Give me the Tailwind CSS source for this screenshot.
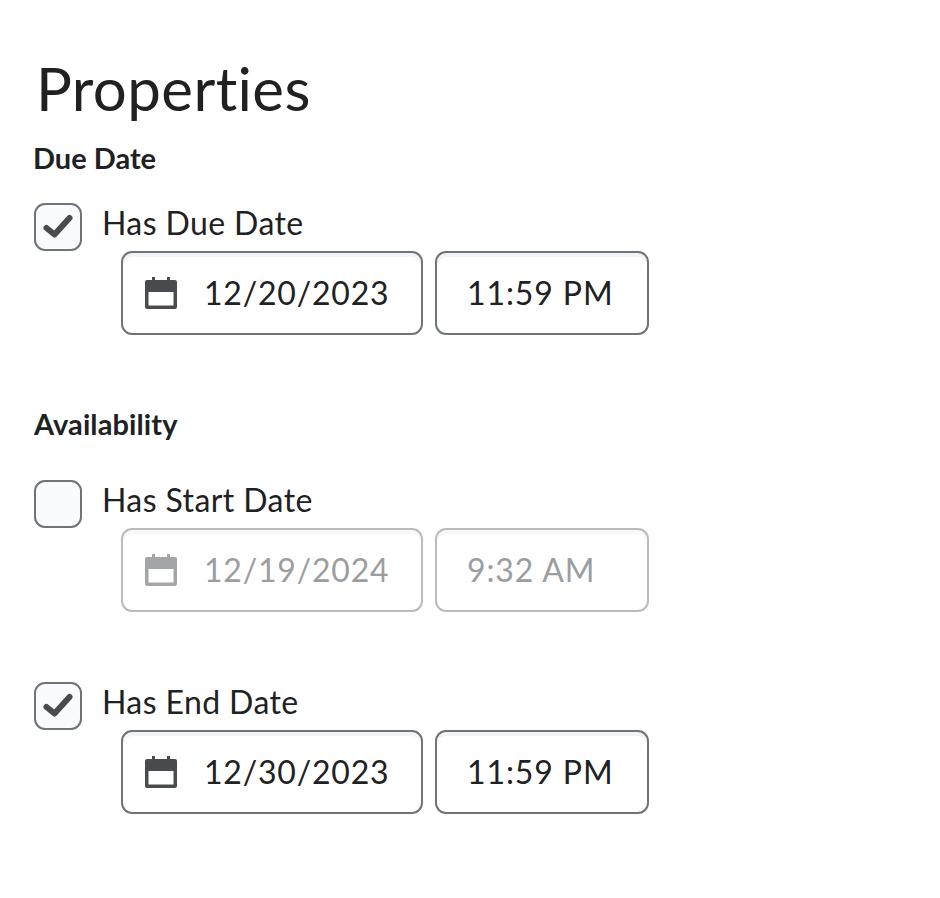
<!DOCTYPE html>
<html><head><meta charset="utf-8"><script src="https://cdn.jsdelivr.net/npm/@tailwindcss/browser@4"></script></head>
<body class="bg-white">
<div class="w-[940px] h-[898px] overflow-hidden pl-[34px] pt-[52px] font-['Lato',sans-serif] text-[#202122]">
  <h1 class="text-[60px] leading-[72px] h-[72px] ml-[2px] font-normal tracking-[0.4px]">Properties</h1>
  <h2 class="mt-[18px] -ml-px text-[29px] leading-[32px] font-bold">Due Date</h2>
  <div class="mt-[29px] flex items-start gap-[20px] h-[48px]">
    <div class="size-[48px] rounded-[11px] border-[2px] border-[#6e7477] bg-[#f9fbff] flex items-center justify-center">
      <svg class="size-[30px]" viewBox="0 0 30 30"><path d="M3.5 16 L11.500 22.500 L26.500 6" fill="none" stroke="#494c4e" stroke-width="6" stroke-linecap="round" stroke-linejoin="round"/></svg>
    </div>
    <span class="text-[32px] leading-[40px] tracking-[0.4px]">Has Due Date</span>
  </div>
  <div class="ml-[87px] flex gap-[12px]">
    <div class="w-[302px] h-[84px] rounded-[11px] border-[2px] border-[#6e7477] shadow-[inset_0_4px_0_0_#f1f3f5] flex items-center pl-[22px]">
      <svg class="size-[32px] shrink-0" viewBox="0 0 32 32"><path fill="#494c4e" fill-rule="evenodd" d="M7 0h3v3h12V0h3v3h5a2 2 0 0 1 2 2v25a2 2 0 0 1-2 2H2a2 2 0 0 1-2-2V5a2 2 0 0 1 2-2h5zM3.500 15v13.500h25V15z"/></svg>
      <span class="ml-[27px] text-[32px] leading-[40px] tracking-[0.8px]">12/20/2023</span>
    </div>
    <div class="w-[214px] h-[84px] rounded-[11px] border-[2px] border-[#6e7477] shadow-[inset_0_4px_0_0_#f1f3f5] flex items-center pl-[30px]">
      <span class="text-[32px] leading-[40px] tracking-[0.9px]">11:59 PM</span>
    </div>
  </div>
  <h2 class="mt-[73px] text-[29px] leading-[32px] font-bold tracking-[0.1px]">Availability</h2>
  <div class="mt-[40px] flex items-start gap-[20px] h-[48px]">
    <div class="size-[48px] rounded-[11px] border-[2px] border-[#6e7477] bg-[#f9fbff]"></div>
    <span class="text-[32px] leading-[40px] tracking-[0.4px]">Has Start Date</span>
  </div>
  <div class="ml-[87px] flex gap-[12px] text-[#9b9e9f]">
    <div class="w-[302px] h-[84px] rounded-[11px] border-[2px] border-[#b9bbbc] shadow-[inset_0_4px_0_0_#f7f8f9] flex items-center pl-[22px]">
      <svg class="size-[32px] shrink-0" viewBox="0 0 32 32"><path fill="#a4a5a7" fill-rule="evenodd" d="M7 0h3v3h12V0h3v3h5a2 2 0 0 1 2 2v25a2 2 0 0 1-2 2H2a2 2 0 0 1-2-2V5a2 2 0 0 1 2-2h5zM3.500 15v13.500h25V15z"/></svg>
      <span class="ml-[27px] text-[32px] leading-[40px] tracking-[0.8px]">12/19/2024</span>
    </div>
    <div class="w-[214px] h-[84px] rounded-[11px] border-[2px] border-[#b9bbbc] shadow-[inset_0_4px_0_0_#f7f8f9] flex items-center pl-[30px]">
      <span class="text-[32px] leading-[40px] tracking-[0.9px]">9:32 AM</span>
    </div>
  </div>
  <div class="mt-[70px] flex items-start gap-[20px] h-[48px]">
    <div class="size-[48px] rounded-[11px] border-[2px] border-[#6e7477] bg-[#f9fbff] flex items-center justify-center">
      <svg class="size-[30px]" viewBox="0 0 30 30"><path d="M3.5 16 L11.500 22.500 L26.500 6" fill="none" stroke="#494c4e" stroke-width="6" stroke-linecap="round" stroke-linejoin="round"/></svg>
    </div>
    <span class="text-[32px] leading-[40px] tracking-[0.4px]">Has End Date</span>
  </div>
  <div class="ml-[87px] flex gap-[12px]">
    <div class="w-[302px] h-[84px] rounded-[11px] border-[2px] border-[#6e7477] shadow-[inset_0_4px_0_0_#f1f3f5] flex items-center pl-[22px]">
      <svg class="size-[32px] shrink-0" viewBox="0 0 32 32"><path fill="#494c4e" fill-rule="evenodd" d="M7 0h3v3h12V0h3v3h5a2 2 0 0 1 2 2v25a2 2 0 0 1-2 2H2a2 2 0 0 1-2-2V5a2 2 0 0 1 2-2h5zM3.500 15v13.500h25V15z"/></svg>
      <span class="ml-[27px] text-[32px] leading-[40px] tracking-[0.8px]">12/30/2023</span>
    </div>
    <div class="w-[214px] h-[84px] rounded-[11px] border-[2px] border-[#6e7477] shadow-[inset_0_4px_0_0_#f1f3f5] flex items-center pl-[30px]">
      <span class="text-[32px] leading-[40px] tracking-[0.9px]">11:59 PM</span>
    </div>
  </div>
</div>
</body></html>
